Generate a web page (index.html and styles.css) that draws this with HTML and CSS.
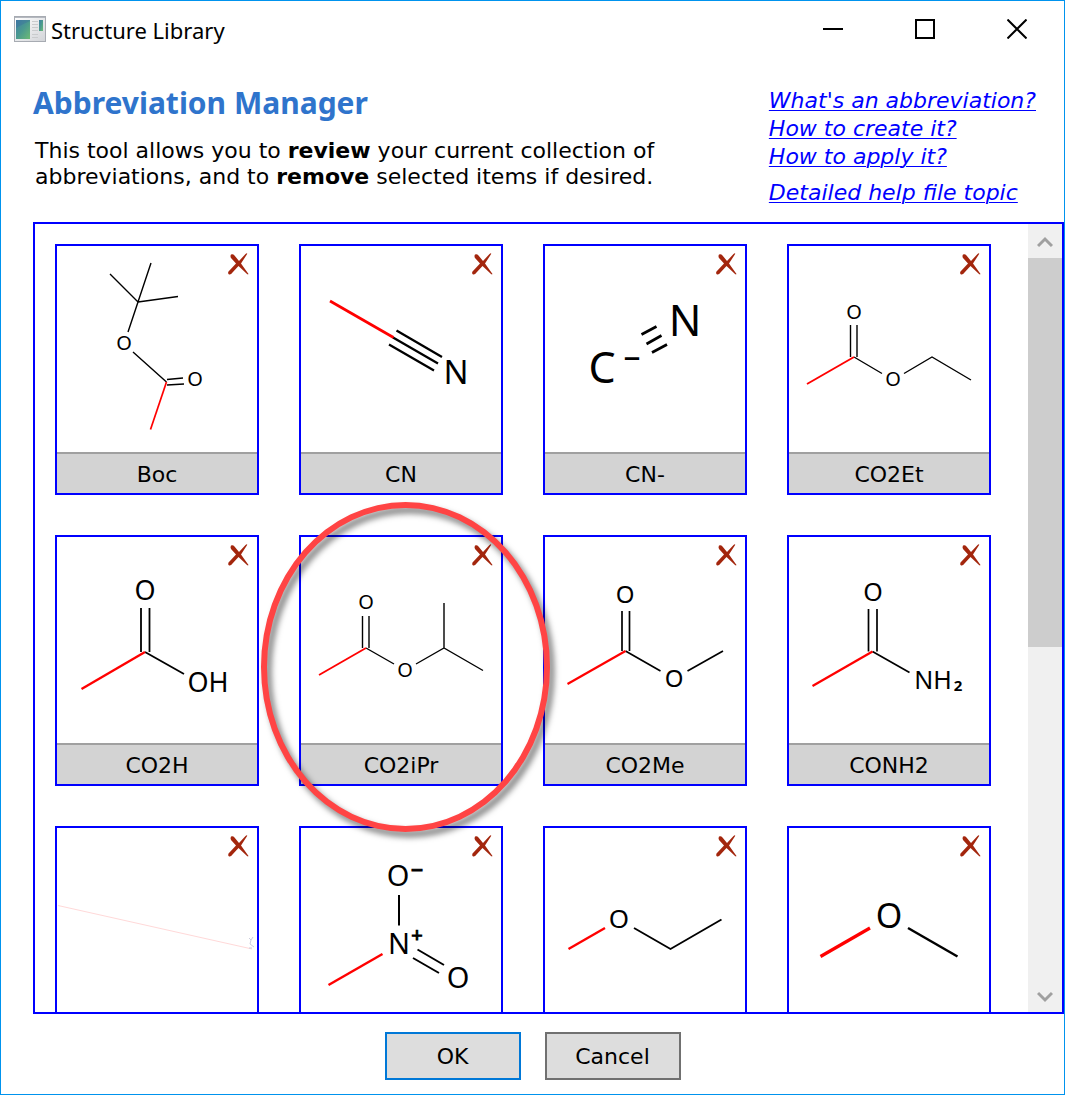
FILE: index.html
```html
<!DOCTYPE html>
<html lang="en">
<head>
<meta charset="utf-8">
<title>Structure Library</title>
<meta name="viewport" content="width=device-width, initial-scale=1">
<link rel="stylesheet" href="styles.css">
</head>
<body>
<svg class="defs" aria-hidden="true">
  <symbol id="cross" viewBox="0 0 22 24">
    <path d="M4 2.500Q6 1.500 7.500 3.500L12 9L18.500 2Q20 .8 20.300 1.800L14 11.500L21.500 22Q21 22.800 20 22L11.500 14L5.500 20.500Q4 23 2 22.500Q.5 21.500 1.500 19.500L9 11.500L4 6Q3 4 4 2.500Z" fill="#a3260d"/>
  </symbol>
</svg>
<div class="window">
  <header class="titlebar">
    <svg class="app-icon" viewBox="0 0 32 26" aria-hidden="true">
      <defs>
        <linearGradient id="pane" x1="0" y1="0" x2="1" y2="1"><stop offset="0" stop-color="#3f7fa5"/><stop offset=".5" stop-color="#4b9a8f"/><stop offset="1" stop-color="#6dbb74"/></linearGradient>
        <linearGradient id="frame" x1="0" y1="0" x2="1" y2="1"><stop offset="0" stop-color="#fff"/><stop offset="1" stop-color="#d2d4d8"/></linearGradient>
      </defs>
      <rect x=".5" y=".5" width="31" height="25" fill="url(#frame)" stroke="#a7abb2"/>
      <path d="M1 1.5H31" stroke="#b4b8bf"/>
      <rect x="2" y="4" width="14" height="19" fill="url(#pane)"/>
      <path d="M2 12Q9 8 16 5V4H2Z" fill="#3d6f9e" opacity=".4"/>
      <path d="M18 5.500H24M18 8.500H24M18 11.500H24M18 14.500H24M18 18.500H24M18 21.500H24" stroke="#c9cbcd"/>
      <rect x="25" y="4" width="4" height="11" fill="url(#pane)"/>
    </svg>
    <span class="caption">Structure Library</span>
    <div class="controls">
      <button type="button" aria-label="Minimize"><svg viewBox="0 0 20 20"><path d="M0 10H20"/></svg></button>
      <button type="button" aria-label="Maximize"><svg viewBox="0 0 20 20"><path d="M1 1H19V19H1Z"/></svg></button>
      <button type="button" aria-label="Close"><svg viewBox="0 0 20 20"><path d="M.5 .5L19.500 19.500M19.500 .5L.5 19.500"/></svg></button>
    </div>
  </header>
  <section class="intro">
    <div class="about">
      <h1>Abbreviation Manager</h1>
      <p>This tool allows you to <strong>review</strong> your current collection of abbreviations, and to <strong>remove</strong> selected items if desired.</p>
    </div>
    <nav class="help">
      <a href="#what">What's an abbreviation?</a>
      <a href="#create">How to create it?</a>
      <a href="#apply">How to apply it?</a>
      <a class="topic" href="#topic">Detailed help file topic</a>
    </nav>
  </section>
  <main class="panel">
    <ul class="cards">
      <li class="card">
        <svg class="molecule" viewBox="57 246 200 206">
          <g stroke-width="1.4"><path d="M110 274L138 302L151 263M138 302L178 296.500M138 302L128 332M133 352L166.500 382M167 379.500L183 378M167 385L184 384"/><path class="bond" stroke-width="1.700" d="M166.500 382L150.500 429.500"/></g>
          <g font-size="20"><text x="124" y="350">O</text><text x="195" y="386">O</text></g>
        </svg>
        <button class="remove" type="button" aria-label="Remove Boc"><svg><use href="#cross"/></svg></button>
        <div class="name">Boc</div>
      </li>
      <li class="card">
        <svg class="molecule" viewBox="301 246 200 206">
          <path stroke-width="2.300" d="M393 337.500L438 363.500M396.500 330.500L442 357M389 344.500L434 370.500"/><path class="bond" stroke-width="2.700" d="M330 301L393.500 337.500"/>
          <text font-size="33" x="456" y="384">N</text>
        </svg>
        <button class="remove" type="button" aria-label="Remove CN"><svg><use href="#cross"/></svg></button>
        <div class="name">CN</div>
      </li>
      <li class="card">
        <svg class="molecule" viewBox="545 246 200 206">
          <path stroke-width="2.700" d="M641.500 334.500L656.500 326.500M646.500 344L661.500 335.500M652 352.500L667 344.500"/>
          <g font-size="43"><text x="602" y="383">C</text><text x="685" y="336">N</text><text font-size="34" x="632" y="368">–</text></g>
        </svg>
        <button class="remove" type="button" aria-label="Remove CN-"><svg><use href="#cross"/></svg></button>
        <div class="name">CN-</div>
      </li>
      <li class="card">
        <svg class="molecule" viewBox="789 246 200 206">
          <path stroke-width="1.400" d="M850.500 325V357M857 325V357M854 357L882 373.500M904 373.500L932 357L971 380"/><path class="bond" stroke-width="1.900" d="M807 384L854 357"/>
          <g font-size="20"><text x="854" y="319">O</text><text x="893" y="386">O</text></g>
        </svg>
        <button class="remove" type="button" aria-label="Remove CO2Et"><svg><use href="#cross"/></svg></button>
        <div class="name">CO2Et</div>
      </li>
      <li class="card">
        <svg class="molecule" viewBox="57 537 200 206">
          <path stroke-width="1.800" d="M141 608V652M149.500 608V652M145 652L184 674"/><path class="bond" stroke-width="2.400" d="M81.500 689L145 652"/>
          <g font-size="27"><text x="145" y="600">O</text><text x="208" y="692">OH</text></g>
        </svg>
        <button class="remove" type="button" aria-label="Remove CO2H"><svg><use href="#cross"/></svg></button>
        <div class="name">CO2H</div>
      </li>
      <li class="card">
        <svg class="molecule" viewBox="301 537 200 206">
          <path stroke-width="1.400" d="M362.500 616V648M369 616V648M366 648L394 664M416 664L444 648L483 670.500M444 648V603"/><path class="bond" stroke-width="1.800" d="M319 675L366 648"/>
          <g font-size="20"><text x="366" y="609">O</text><text x="405" y="677">O</text></g>
        </svg>
        <button class="remove" type="button" aria-label="Remove CO2iPr"><svg><use href="#cross"/></svg></button>
        <div class="name">CO2iPr</div>
        <div class="highlight"></div>
      </li>
      <li class="card">
        <svg class="molecule" viewBox="545 537 200 206">
          <path stroke-width="1.700" d="M622 611V651M629.500 611V651M625.500 651L660.500 671M687.500 671L723 651"/><path class="bond" stroke-width="2.200" d="M567.500 684L625.500 651"/>
          <g font-size="24"><text x="625" y="603">O</text><text x="674" y="687">O</text></g>
        </svg>
        <button class="remove" type="button" aria-label="Remove CO2Me"><svg><use href="#cross"/></svg></button>
        <div class="name">CO2Me</div>
      </li>
      <li class="card">
        <svg class="molecule" viewBox="789 537 200 206">
          <path stroke-width="1.700" d="M868.500 609V651.500M877 609V651.500M872.500 651.500L909.500 672.500"/><path class="bond" stroke-width="2.300" d="M812.500 686L872.500 651.500"/>
          <g font-size="25"><text x="873" y="601">O</text><text x="933" y="689">NH</text><text class="sub" font-size="15" x="958" y="691">2</text></g>
        </svg>
        <button class="remove" type="button" aria-label="Remove CONH2"><svg><use href="#cross"/></svg></button>
        <div class="name">CONH2</div>
      </li>
      <li class="card">
        <svg class="molecule" viewBox="57 828 200 206">
          <path class="faint" d="M58 905.500L252 949"/><path class="speck" d="M249 938L251 940L250 944L254 947M251 940L253 937M249 948H252"/>
        </svg>
        <button class="remove" type="button" aria-label="Remove item"><svg><use href="#cross"/></svg></button>
        <div class="name"></div>
      </li>
      <li class="card">
        <svg class="molecule" viewBox="301 828 200 206">
          <path stroke-width="2" d="M399 895V925.500M417.500 949.500L444 965M413 958L439 973"/><path class="bond" stroke-width="2.500" d="M328.500 985L382.500 954"/>
          <g font-size="29"><text x="398" y="886">O</text><text x="399" y="954">N</text><text x="458" y="988">O</text><text class="charge" font-size="24" x="417" y="876">–</text><text class="charge" font-size="20" x="417" y="942">+</text></g>
        </svg>
        <button class="remove" type="button" aria-label="Remove NO2"><svg><use href="#cross"/></svg></button>
        <div class="name"></div>
      </li>
      <li class="card">
        <svg class="molecule" viewBox="545 828 200 206">
          <path stroke-width="1.900" d="M634 928L670.500 949L721.500 919.500"/><path class="bond" stroke-width="2.400" d="M568.500 949L605 928"/>
          <text font-size="26" x="619" y="928">O</text>
        </svg>
        <button class="remove" type="button" aria-label="Remove OEt"><svg><use href="#cross"/></svg></button>
        <div class="name"></div>
      </li>
      <li class="card">
        <svg class="molecule" viewBox="789 828 200 206">
          <path stroke-width="2.500" d="M908 928L957.500 956.500"/><path class="bond" stroke-width="3.200" d="M820.500 956.500L870 928"/>
          <text font-size="34" x="889" y="928">O</text>
        </svg>
        <button class="remove" type="button" aria-label="Remove OMe"><svg><use href="#cross"/></svg></button>
        <div class="name"></div>
      </li>
    </ul>
    <div class="scrollbar">
      <button type="button" aria-label="Scroll up"><svg viewBox="0 0 16 16"><path d="M1 13L8 6L15 13"/></svg></button>
      <div class="track"><div class="thumb"></div></div>
      <button type="button" aria-label="Scroll down"><svg viewBox="0 0 16 16"><path d="M1 6L8 13L15 6"/></svg></button>
    </div>
  </main>
  <footer class="actions">
    <button class="default" type="button">OK</button>
    <button type="button">Cancel</button>
  </footer>
</div>
</body>
</html>
```
FILE: styles.css
```css
* {
  box-sizing: border-box;
}

body {
  margin: 0;
  background: #fff;
  color: #000;
  font: 22px/26px "DejaVu Sans", sans-serif;
}

button {
  padding: 0;
  border: 0;
  background: none;
  color: inherit;
  font: inherit;
}

.defs {
  position: absolute;
  width: 0;
  height: 0;
}

.window {
  display: flex;
  flex-direction: column;
  height: 100vh;
  border: 1px solid #0093ee;
}

.titlebar {
  display: flex;
  align-items: center;
  height: 56px;
  padding-left: 13px;
  gap: 5px;
}

.app-icon {
  width: 32px;
  height: 26px;
}

.caption {
  padding-top: 2px;
  font-family: "Noto Sans", sans-serif;
}

.controls {
  display: flex;
  height: 100%;
  margin-left: auto;
  padding-right: 1px;
}

.controls button {
  display: grid;
  place-items: center;
  width: 92px;
}

.controls svg {
  width: 20px;
  height: 20px;
  fill: none;
  stroke: #000;
  stroke-width: 2;
}

.intro {
  display: flex;
  justify-content: space-between;
  height: 165px;
  padding: 26px 28px 0 32px;
}

.about {
  max-width: 660px;
}

h1 {
  margin: 0 0 15px;
  color: #2f74cc;
  font: bold 30px/40px "Noto Sans", sans-serif;
}

p {
  margin: 0 0 0 2px;
}

.help {
  display: flex;
  flex-direction: column;
  align-items: flex-start;
  padding-top: 4px;
  line-height: 28px;
  font-style: italic;
}

.help a {
  color: #00f;
  text-decoration-thickness: 1px;
  text-underline-offset: 2px;
}

.help .topic {
  margin-top: 8px;
}

.panel {
  display: flex;
  flex: 1;
  min-height: 0;
  margin-left: 32px;
  border: 2px solid #00f;
}

.cards {
  display: grid;
  flex: 1;
  grid-template-columns: repeat(auto-fill, 204px);
  align-content: start;
  gap: 40px;
  margin: 0;
  padding: 20px;
  overflow: hidden;
  list-style: none;
}

.card {
  position: relative;
  border: 2px solid #00f;
}

.molecule {
  display: block;
  width: 100%;
  height: 206px;
  fill: none;
  stroke: #000;
}

.molecule text {
  fill: #000;
  stroke: none;
  font-family: "Noto Sans", sans-serif;
  text-anchor: middle;
}

.molecule .sub {
  font-weight: bold;
}

.molecule .charge {
  stroke: #000;
  stroke-width: 1px;
}

.molecule .bond {
  stroke: #f00;
}

.molecule .faint {
  stroke: #ffd9d9;
}

.molecule .speck {
  stroke: #ccd;
}

.remove {
  position: absolute;
  top: 6px;
  right: 8px;
  width: 22px;
  height: 24px;
}

.remove svg {
  display: block;
  width: 22px;
  height: 24px;
}

.name {
  height: 41px;
  border-top: 2px solid #a0a0a0;
  background: #d3d3d3;
  line-height: 41px;
  text-align: center;
}

/* Ring drawn over the grid around the selected card */
.highlight {
  position: absolute;
  z-index: 1;
  top: -35px;
  left: -40px;
  width: 289px;
  height: 330px;
  border: 6px solid #ff4444;
  border-radius: 50%;
  filter: drop-shadow(4px 5px 3px rgba(0, 0, 0, .55));
  pointer-events: none;
}

.scrollbar {
  display: flex;
  flex-direction: column;
  width: 34px;
  background: #f0f0f0;
}

.scrollbar button {
  display: grid;
  place-items: center;
  height: 34px;
}

.scrollbar svg {
  width: 16px;
  height: 16px;
  fill: none;
  stroke: #a0a0a0;
  stroke-width: 3;
}

.track {
  flex: 1;
}

.thumb {
  height: 54%;
  background: #cdcdcd;
}

.actions {
  display: flex;
  justify-content: center;
  gap: 24px;
  padding: 18px 0 14px;
}

.actions button {
  width: 136px;
  height: 48px;
  padding-top: 2px;
  border: 2px solid #707070;
  background: #ddd;
}

.actions .default {
  border-color: #0078d7;
}
```
